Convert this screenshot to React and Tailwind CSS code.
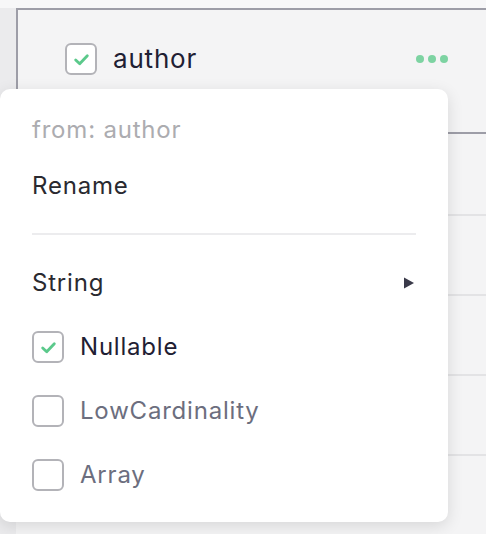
import React from "react";

function Check() {
  return (
    <svg width="19" height="19" viewBox="0 0 18 18" fill="none">
      <path d="M3.5 9.5 L7.3 13 L14.5 5.5" stroke="#5bc98b" strokeWidth="2.7" strokeLinecap="round" strokeLinejoin="round" />
    </svg>
  );
}

function Box({ checked }) {
  return (
    <div className="w-[32px] h-[32px] rounded-[6px] border-2 border-[#b3b3b8] bg-white flex items-center justify-center shrink-0">
      {checked ? <Check /> : null}
    </div>
  );
}

export default function App() {
  const font = { fontFamily: "Inter, 'Noto Sans', sans-serif" };
  return (
    <div className="relative w-[486px] h-[534px] overflow-hidden bg-[#f6f6f7]" style={font}>
      <div className="flex flex-col h-full">
        <div className="h-[8px] bg-[#f7f7f8]" />
        <div className="flex flex-1">
          <div className="w-[16px] bg-[#ebebed]" />
          <div className="flex-1 flex flex-col bg-[#f4f4f5]">
            <div className="h-[126px] border-t-2 border-l-2 border-b-2 border-[#9d9da7] flex items-start pt-[32px] pl-[47px] pr-[38px]">
              <div className="flex items-center w-full h-[34px]">
                <Box checked />
                <span className="ml-[16px] text-[26px] tracking-[0.8px] text-[#1f2033] leading-none">author</span>
                <div className="ml-auto flex gap-[4px]">
                  <span className="w-[8px] h-[8px] rounded-full bg-[#7dd3a2]" />
                  <span className="w-[8px] h-[8px] rounded-full bg-[#7dd3a2]" />
                  <span className="w-[8px] h-[8px] rounded-full bg-[#7dd3a2]" />
                </div>
              </div>
            </div>
            <div className="h-[82px] border-b-2 border-[#e3e3e5]" />
            <div className="h-[80px] border-b-2 border-[#e3e3e5]" />
            <div className="h-[80px] border-b-2 border-[#e3e3e5]" />
            <div className="h-[80px] border-b-2 border-[#e3e3e5]" />
            <div className="flex-1" />
          </div>
        </div>
      </div>

      <div className="absolute left-0 top-[89px] w-[448px] h-[433px] bg-white rounded-[10px] shadow-[0_4px_16px_rgba(0,0,0,0.12)] pt-[13px] pl-[32px] pr-[32px] text-[24px] tracking-[0.8px]">
        <div className="h-[56px] flex items-center text-[#acacb0]">from: author</div>
        <div className="h-[56px] flex items-center text-[#2a2a30]">Rename</div>
        <div className="mt-[19px] mb-[20px] h-[2px] bg-[#ececee]" />
        <div className="h-[56px] flex items-center text-[#2a2a30]">
          <span>String</span>
          <span className="ml-auto mr-[1px]">
            <svg width="12" height="12" viewBox="0 0 12 12"><path d="M1 0.5 L11 6 L1 11.5 Z" fill="#3a3a4a" /></svg>
          </span>
        </div>
        <div className="h-[4px]" />
        <div className="h-[64px] flex items-center">
          <Box checked />
          <span className="ml-[16px] text-[#1f2033]">Nullable</span>
        </div>
        <div className="h-[64px] flex items-center">
          <Box />
          <span className="ml-[16px] text-[#6c6e7e]">LowCardinality</span>
        </div>
        <div className="h-[64px] flex items-center">
          <Box />
          <span className="ml-[16px] text-[#6c6e7e]">Array</span>
        </div>
      </div>
    </div>
  );
}
